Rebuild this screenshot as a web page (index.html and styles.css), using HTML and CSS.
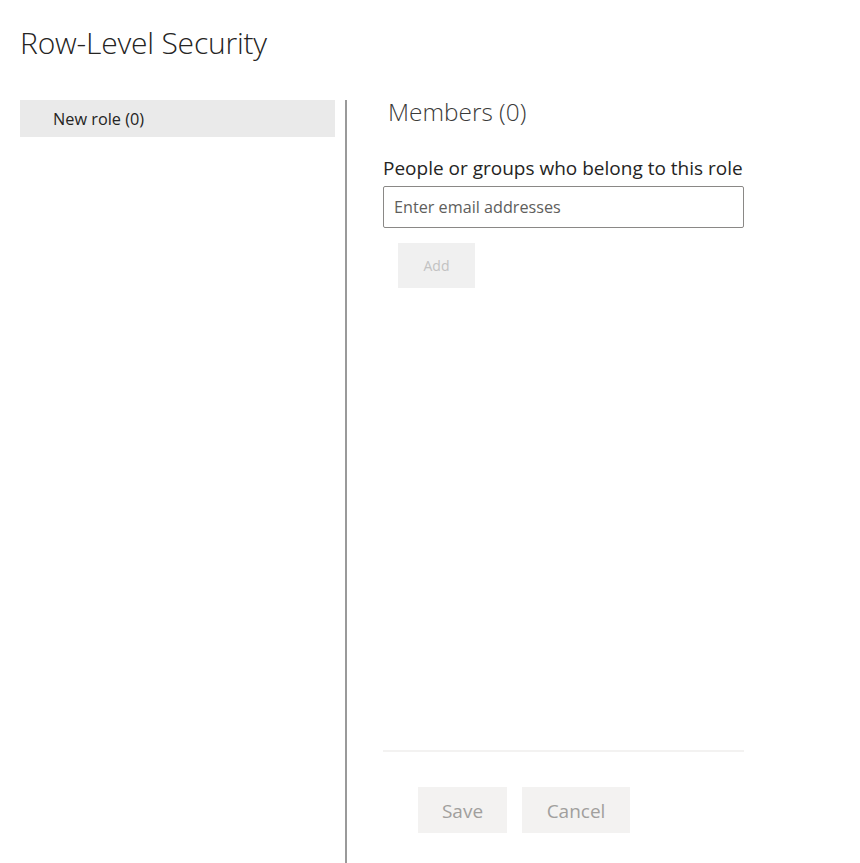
FILE: index.html
```html
<!DOCTYPE html>
<html lang="en">
<head>
<meta charset="utf-8">
<title>Row-Level Security</title>
<link rel="stylesheet" href="styles.css">
</head>
<body>
<h1 class="page-title">Row-Level Security</h1>
<div class="layout">
  <aside class="roles">
    <div class="role-item">New role (0)</div>
  </aside>
  <div class="divider"></div>
  <section class="members">
    <h2 class="members-title">Members (0)</h2>
    <label class="field-label" for="email">People or groups who belong to this role</label>
    <input id="email" class="email-input" type="text" placeholder="Enter email addresses">
    <div class="add-row"><button class="btn btn-add" disabled>Add</button></div>
    <div class="spacer"></div>
    <div class="footer">
      <button class="btn btn-footer btn-save" disabled>Save</button>
      <button class="btn btn-footer btn-cancel" disabled>Cancel</button>
    </div>
  </section>
</div>
</body>
</html>
```
FILE: styles.css
```css
html, body {
  margin: 0;
  padding: 0;
  height: 100%;
}
body {
  font-family: "Open Sans", "Noto Sans", "Liberation Sans", sans-serif;
  color: #252423;
  background: #fff;
  overflow: hidden;
}
.page-title {
  font-weight: 300;
  font-size: 30px;
  line-height: 40px;
  margin: 0;
  padding: 23px 20px 0 20px;
  height: 74px;
  box-sizing: border-box;
  color: #252423;
  letter-spacing: -0.2px;
}
.layout {
  display: flex;
  height: 763px;
  margin-top: 26px;
}
.roles {
  width: 315px;
  margin-left: 20px;
}
.role-item {
  background: #eaeaea;
  height: 37px;
  box-sizing: border-box;
  line-height: 37px;
  padding-left: 33px;
  padding-top: 1px;
  font-size: 16.3px;
  color: #252423;
}
.divider {
  width: 2px;
  background: #9a9a9a;
  margin-left: 10px;
}
.members {
  display: flex;
  flex-direction: column;
  margin-left: 36px;
  width: 361px;
}
.members-title {
  font-weight: 300;
  font-size: 24.4px;
  line-height: 28px;
  margin: -2px 0 0 5px;
  color: #3b3a39;
}
.field-label {
  font-size: 19px;
  line-height: 24px;
  margin-top: 30px;
  color: #252423;
  white-space: nowrap;
}
.email-input {
  margin-top: 6px;
  height: 42px;
  box-sizing: border-box;
  border: 1px solid #8a8886;
  border-radius: 2px;
  padding: 0 10px;
  font-family: inherit;
  font-size: 16.2px;
  color: #252423;
  outline: none;
}
.email-input::placeholder {
  color: #605e5c;
}
.add-row {
  margin-top: 15px;
  padding-left: 15px;
}
.btn {
  font-family: inherit;
  border: none;
  border-radius: 0;
  cursor: default;
}
.btn-add {
  width: 77px;
  height: 45px;
  background: #f0f0f0;
  color: #c2c2c2;
  font-size: 14px;
}
.spacer {
  flex: 1;
}
.footer {
  border-top: 2px solid #f3f2f1;
  padding: 35px 0 30px 35px;
  display: flex;
  gap: 15px;
}
.btn-footer {
  height: 46px;
  padding-top: 2px;
  background: #f3f2f1;
  color: #a19f9d;
  font-size: 19px;
}
.btn-save {
  width: 89px;
}
.btn-cancel {
  width: 108px;
}
```
